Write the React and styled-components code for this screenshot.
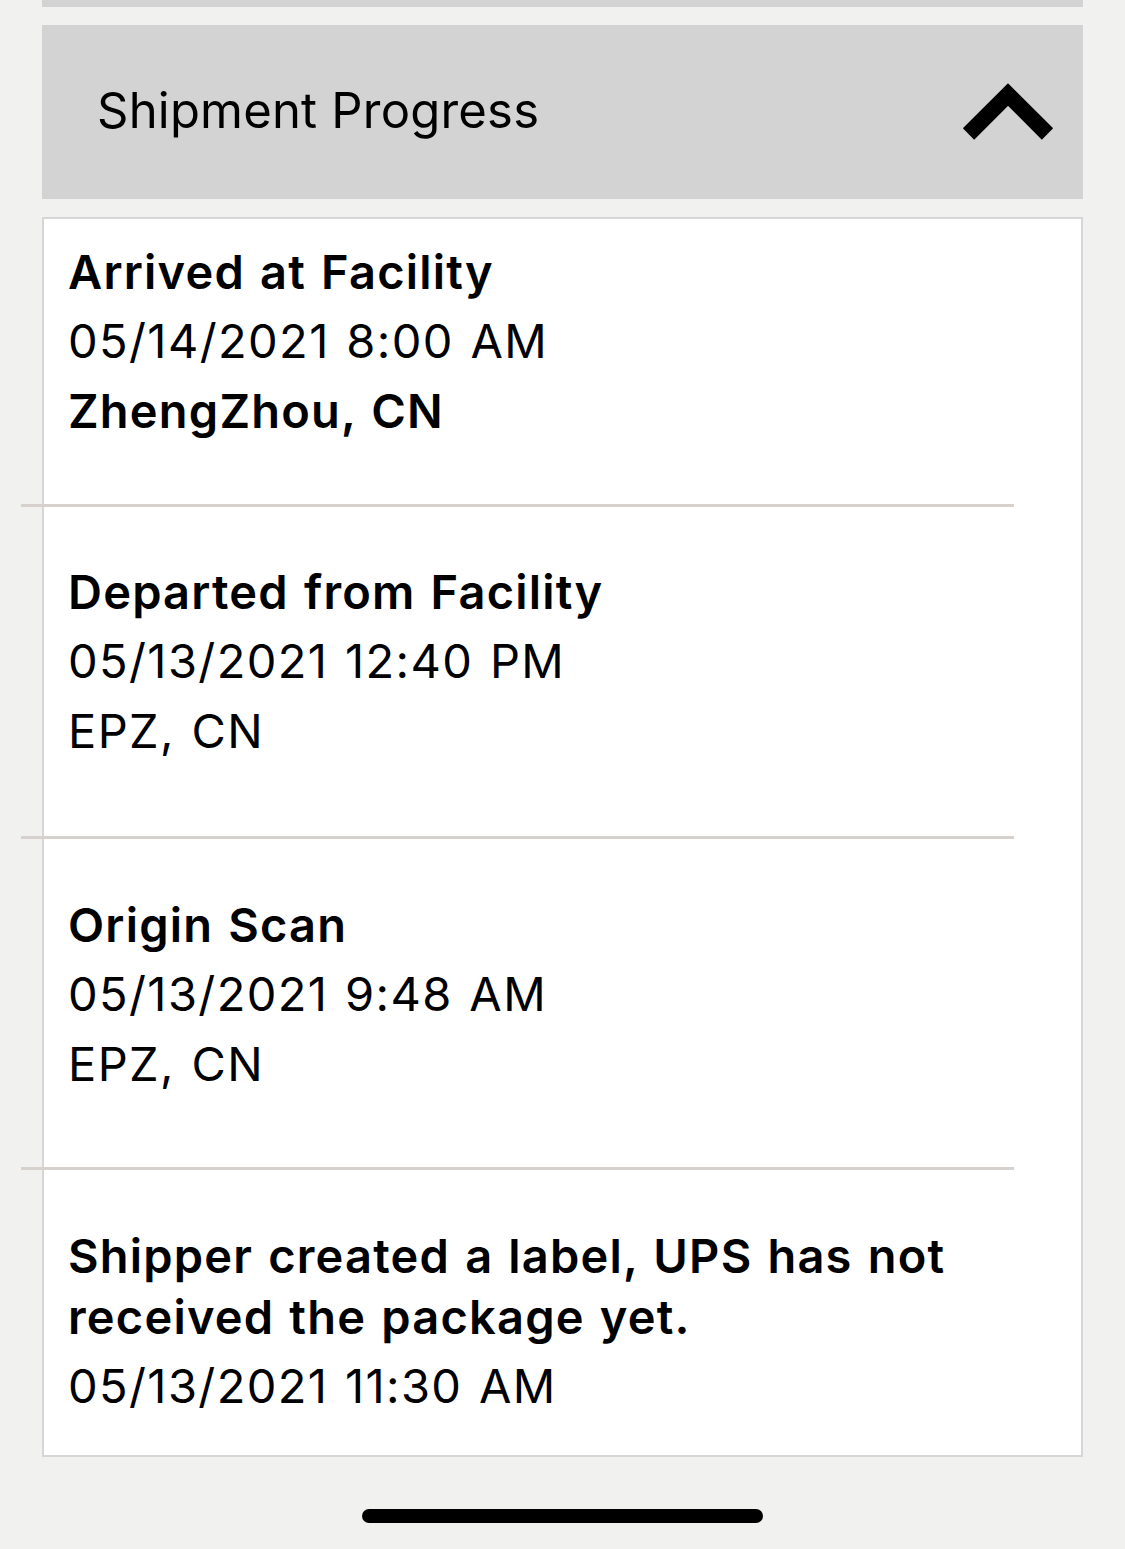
import React from "react";
import styled, { createGlobalStyle } from "styled-components";

const GlobalStyle = createGlobalStyle`
  html, body {
    margin: 0;
    padding: 0;
    background: #f1f1ef;
  }
  body {
    font-family: Inter, "Noto Sans", "Liberation Sans", sans-serif;
    color: #000;
  }
`;

const Page = styled.div`
  display: flex;
  flex-direction: column;
  min-height: 1549px;
  padding: 0 42px;
  box-sizing: border-box;
`;

const TopBar = styled.div`
  height: 7px;
  background: #d3d3d3;
`;

const Header = styled.div`
  display: flex;
  align-items: center;
  justify-content: space-between;
  height: 174px;
  margin-top: 18px;
  padding: 0 27px 0 55px;
  background: #d3d3d3;
`;

const HeaderTitle = styled.span`
  font-size: 49px;
  font-weight: 400;
  letter-spacing: 0.2px;
  padding-bottom: 4px;
`;

const Card = styled.div`
  margin-top: 18px;
  background: #fff;
  border: 2px solid #d6d6d6;
`;

const Item = styled.div`
  display: flex;
  flex-direction: column;
  padding: ${(p) => p.$top}px 24px ${(p) => p.$bottom}px;
`;

const Title = styled.div`
  font-size: 47px;
  font-weight: 600;
  line-height: 61px;
  letter-spacing: 1.2px;
  word-spacing: 2px;
`;

const Line = styled.div`
  font-size: 47px;
  line-height: 70px;
  font-weight: ${(p) => (p.$bold ? 600 : 400)};
  letter-spacing: ${(p) => (p.$bold ? 1.2 : 1.4)}px;
  word-spacing: 2px;
  margin-top: ${(p) => (p.$first ? 4 : 0)}px;
`;

const Divider = styled.div`
  height: 3px;
  background: #d6d1cc;
  margin: 0 67px 0 -23px;
`;

const HomeIndicator = styled.div`
  align-self: center;
  width: 401px;
  height: 14px;
  border-radius: 7px;
  background: #000;
  margin-top: 52px;
`;

const ChevronUp = () => (
  <svg width="96" height="64" viewBox="0 0 96 64" fill="none">
    <polyline
      points="8.5,54 48,14.5 87.5,54"
      stroke="#000"
      strokeWidth="16"
      strokeLinejoin="miter"
      strokeLinecap="butt"
    />
  </svg>
);

const events = [
  {
    title: "Arrived at Facility",
    date: "05/14/2021 8:00 AM",
    place: "ZhengZhou, CN",
    boldPlace: true,
    top: 22,
    bottom: 58,
  },
  {
    title: "Departed from Facility",
    date: "05/13/2021 12:40 PM",
    place: "EPZ, CN",
    top: 54,
    bottom: 70,
  },
  {
    title: "Origin Scan",
    date: "05/13/2021 9:48 AM",
    place: "EPZ, CN",
    top: 55,
    bottom: 68,
  },
  {
    title: "Shipper created a label, UPS has not received the package yet.",
    date: "05/13/2021 11:30 AM",
    top: 55,
    bottom: 34,
  },
];

export default function App() {
  return (
    <>
      <GlobalStyle />
      <Page>
        <TopBar />
        <Header>
          <HeaderTitle>Shipment Progress</HeaderTitle>
          <ChevronUp />
        </Header>
        <Card>
          {events.map((e, i) => (
            <React.Fragment key={i}>
              {i > 0 && <Divider />}
              <Item $top={e.top} $bottom={e.bottom}>
                <Title>{e.title}</Title>
                <Line $first>{e.date}</Line>
                {e.place && <Line $bold={e.boldPlace}>{e.place}</Line>}
              </Item>
            </React.Fragment>
          ))}
        </Card>
        <HomeIndicator />
      </Page>
    </>
  );
}
